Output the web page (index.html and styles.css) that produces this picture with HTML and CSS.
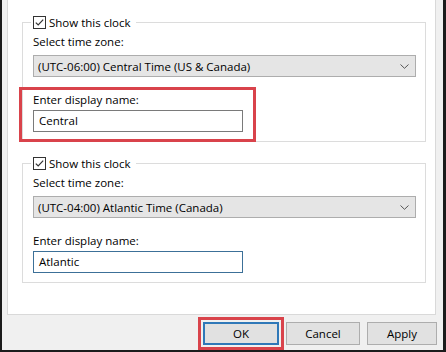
FILE: index.html
```html
<!DOCTYPE html>
<html>
<head>
<meta charset="utf-8">
<link rel="stylesheet" href="styles.css">
</head>
<body>
<div class="window">
  <div class="panel">
    <fieldset class="group">
      <legend class="group-title">
        <span class="legend-row">
          <svg class="check" width="13" height="13" viewBox="0 0 13 13"><rect x="0.5" y="0.5" width="12" height="12" fill="#fff" stroke="#333"/><path d="M2.8 6.6 L5.2 9 L10.2 3.6" fill="none" stroke="#333" stroke-width="1.2"/></svg>
          <span>Show this clock</span>
        </span>
      </legend>
      <div class="label">Select time zone:</div>
      <div class="select">
        <span>(UTC-06:00) Central Time (US &amp; Canada)</span>
        <svg class="chevron" width="9" height="5" viewBox="0 0 9 5"><path d="M0.5 0.5 L4.5 4.3 L8.5 0.5" fill="none" stroke="#555" stroke-width="1"/></svg>
      </div>
      <div class="name-field highlight">
        <div class="label">Enter display name:</div>
        <div class="input">Central</div>
      </div>
    </fieldset>
    <fieldset class="group">
      <legend class="group-title">
        <span class="legend-row">
          <svg class="check" width="13" height="13" viewBox="0 0 13 13"><rect x="0.5" y="0.5" width="12" height="12" fill="#fff" stroke="#333"/><path d="M2.8 6.6 L5.2 9 L10.2 3.6" fill="none" stroke="#333" stroke-width="1.2"/></svg>
          <span>Show this clock</span>
        </span>
      </legend>
      <div class="label">Select time zone:</div>
      <div class="select">
        <span>(UTC-04:00) Atlantic Time (Canada)</span>
        <svg class="chevron" width="9" height="5" viewBox="0 0 9 5"><path d="M0.5 0.5 L4.5 4.3 L8.5 0.5" fill="none" stroke="#555" stroke-width="1"/></svg>
      </div>
      <div class="name-field">
        <div class="label">Enter display name:</div>
        <div class="input input-focus">Atlantic</div>
      </div>
    </fieldset>
  </div>
  <div class="buttons">
    <button class="btn btn-ok">OK</button>
    <button class="btn btn-cancel">Cancel</button>
    <button class="btn btn-apply">Apply</button>
  </div>
</div>
</body>
</html>
```
FILE: styles.css
```css
html, body {
  margin: 0;
  padding: 0;
  background: #ffffff;
}

.window {
  width: 446px;
  height: 352px;
  box-sizing: border-box;
  border-left: 2px solid #1b1b1b;
  border-right: 3px solid #1b1b1b;
  border-bottom: 2px solid #1b1b1b;
  background: #f0f0f0;
  font-family: "Open Sans", "Noto Sans", sans-serif;
  font-size: 11.5px;
  color: #000;
  display: flex;
  flex-direction: column;
}

.panel {
  margin-left: 5px;
  width: 429px;
  height: 315px;
  box-sizing: border-box;
  background: #fff;
  border: 1px solid #d9d9d9;
  border-top: none;
  padding: 15px 0 0 14px;
}

.group {
  width: 404px;
  min-width: 0;
  box-sizing: border-box;
  margin: 0;
  border: 1px solid #dcdcdc;
  padding: 4px 0 9px 10px;
}

.group + .group {
  margin-top: 14px;
}

.group-title {
  margin-left: -2px;
  padding: 0 5px 0 2px;
  height: 15px;
  line-height: 15px;
}

.legend-row {
  display: inline-flex;
  align-items: center;
  gap: 3px;
  height: 15px;
}

.check {
  display: block;
  flex: none;
}

.label {
  height: 16px;
  line-height: 16px;
  white-space: nowrap;
}

.select {
  margin-top: 5px;
  width: 383px;
  height: 22px;
  box-sizing: border-box;
  border: 1px solid #adadad;
  background: #e5e5e5;
  display: flex;
  align-items: center;
  justify-content: space-between;
  padding: 0 6px 0 4px;
  white-space: nowrap;
}

.chevron {
  display: block;
}

.name-field {
  position: relative;
  width: 210px;
  margin-top: 15px;
}

.highlight::after {
  content: "";
  position: absolute;
  top: -5px;
  left: -14px;
  right: -13px;
  bottom: -10px;
  border: 3px solid #d9434b;
}

.input {
  margin-top: 2px;
  width: 210px;
  height: 22px;
  box-sizing: border-box;
  border: 1px solid #7a7a7a;
  background: #fff;
  padding-left: 5px;
  line-height: 20px;
}

.input-focus {
  border-color: #3c7098;
}

.buttons {
  display: flex;
  justify-content: flex-end;
  gap: 7px;
  padding: 7px 6px 0 0;
}

.btn {
  height: 23px;
  box-sizing: border-box;
  border: 1px solid #adadad;
  background: #e1e1e1;
  font-family: "Open Sans", "Noto Sans", sans-serif;
  font-size: 11.5px;
  color: #000;
  padding: 0;
  margin: 0;
}

.btn-ok {
  width: 76px;
  border: 2px solid #2f78b8;
  outline: 3px solid #d9434b;
  outline-offset: 2px;
}

.btn-cancel {
  width: 74px;
}

.btn-apply {
  width: 70px;
}
```
